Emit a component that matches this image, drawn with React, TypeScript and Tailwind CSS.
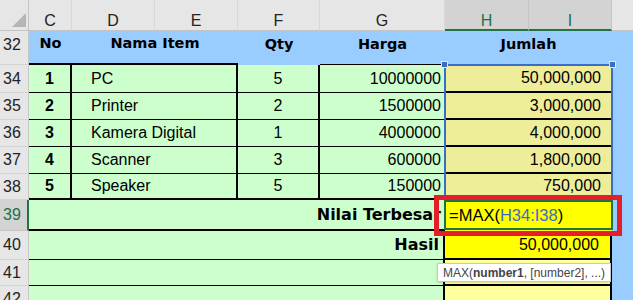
import React from 'react';

const rows = [
  { r: '34', no: '1', name: 'PC', qty: '5', harga: '10000000', jumlah: '50,000,000' },
  { r: '35', no: '2', name: 'Printer', qty: '2', harga: '1500000', jumlah: '3,000,000' },
  { r: '36', no: '3', name: 'Kamera Digital', qty: '1', harga: '4000000', jumlah: '4,000,000' },
  { r: '37', no: '4', name: 'Scanner', qty: '3', harga: '600000', jumlah: '1,800,000' },
  { r: '38', no: '5', name: 'Speaker', qty: '5', harga: '150000', jumlah: '750,000' },
];

const rowHead = 'bg-[#e6e6e6] border-r border-b border-r-[#c6c6c6] border-b-[#d4d4d4] flex items-center pl-[3px] text-[16px] text-[#222]';
const colHead = 'bg-[#e6e6e6] border-r border-b border-r-[#d8d8d8] border-b-[#c4c4c4] flex items-center justify-center pt-[12px] text-[16px] text-[#222]';
const colHeadSel = 'bg-[#d3d3d3] border-r border-b-2 border-r-[#c4c4c4] border-b-[#217346] flex items-center justify-center pt-[12px] text-[16px] text-[#1e7145]';
const blueHead = "bg-[#99ccff] flex items-center justify-center pb-[6px] font-['DejaVu_Sans',sans-serif] font-bold text-[14.5px] text-black";
const green = 'bg-[#ccffcc] flex items-center text-black';
const num = "font-['Liberation_Sans',Arial,sans-serif] text-[16px]";

export default function App() {
  return (
    <div className="relative w-[633px] h-[300px] overflow-hidden bg-white font-['Liberation_Sans',Arial,sans-serif]">
      <div className="grid grid-cols-[29px_43px_83px_83px_82px_125px_84px_83px_21px] grid-rows-[31px_34px_28px_27px_27px_27px_26px_31px_29px_26px_26px]">
        {/* column headers */}
        <div className="bg-[#e6e6e6] border-r border-b border-[#c4c4c4] relative">
          <svg className="absolute left-[12px] top-[13px]" width="14" height="14" viewBox="0 0 14 14">
            <polygon points="14,0 14,14 0,14" fill="#b5b5b5" />
          </svg>
        </div>
        <div className={colHead}>C</div>
        <div className={colHead}>D</div>
        <div className={colHead}>E</div>
        <div className={colHead}>F</div>
        <div className={colHead}>G</div>
        <div className={colHeadSel}>H</div>
        <div className={colHeadSel}>I</div>
        <div className="bg-[#e6e6e6] border-b border-[#c4c4c4]" />

        {/* row 32 */}
        <div className={`${rowHead} pb-[6px]`}>32</div>
        <div className={`${blueHead} border-b-2 border-black`}>No</div>
        <div className={`${blueHead} col-span-2 border-b-2 border-black`}>Nama Item</div>
        <div className={blueHead}>Qty</div>
        <div className={`${blueHead} border-b border-black`}>Harga</div>
        <div className={`${blueHead} col-span-2`}>Jumlah</div>
        <div className="bg-[#99ccff]" />

        {/* data rows */}
        {rows.map((it, i) => {
          const last = i === rows.length - 1;
          const bb = last ? 'border-b-2' : 'border-b';
          return (
            <React.Fragment key={it.r}>
              <div className={rowHead}>{it.r}</div>
              <div className={`${green} ${bb} border-r-2 border-black justify-center font-bold text-[16px]`}>{it.no}</div>
              <div className={`${green} ${bb} border-r-2 border-black col-span-2 pl-[19px] text-[16px]`}>{it.name}</div>
              <div className={`${green} ${bb} border-r-2 border-black justify-center ${num}`}>{it.qty}</div>
              <div className={`${green} ${bb} border-black justify-end pr-[4px] ${num}`}>{it.harga}</div>
              <div className={`bg-[#eeee9a] flex items-center justify-end pr-[11px] col-span-2 border-b-2 border-black ${num}`}>{it.jumlah}</div>
              <div className="bg-[#99ccff]" />
            </React.Fragment>
          );
        })}

        {/* row 39 */}
        <div className="bg-[#d3d3d3] border-r-2 border-b border-r-[#217346] border-b-[#c4c4c4] flex items-center pl-[3px] text-[16px] text-[#1e7145]">39</div>
        <div className={`${green} col-span-5 border-b-2 border-black justify-end pr-[4px] font-['DejaVu_Sans',sans-serif] font-bold text-[16px]`}>Nilai Terbesar</div>
        <div className="bg-[#ffff00] col-span-2 flex items-center pl-[4px] text-[16.5px] text-black">
          =MAX(<span className="text-[#3b6cc6]">H34:I38</span>)
        </div>
        <div className="bg-[#99ccff]" />

        {/* row 40 */}
        <div className={rowHead}>40</div>
        <div className={`${green} col-span-5 border-b border-r-2 border-black justify-end pr-[4px] font-['DejaVu_Sans',sans-serif] font-bold text-[16px]`}>Hasil</div>
        <div className={`bg-[#ffff00] col-span-2 flex items-center justify-end pr-[11px] border-r-2 border-b-2 border-black ${num}`}>50,000,000</div>
        <div className="bg-[#99ccff]" />

        {/* rows 41, 42 */}
        {['41', '42'].map((r) => (
          <React.Fragment key={r}>
            <div className={rowHead}>{r}</div>
            <div className={`${green} col-span-5 border-b border-r-2 border-black`} />
            <div className="bg-[#ffff9c] col-span-2 border-r-2 border-b-2 border-black" />
            <div className="bg-[#99ccff]" />
          </React.Fragment>
        ))}
      </div>

      {/* range highlight H34:I38 */}
      <div className="absolute left-[444px] top-[64px] w-[169px] h-[137px] border-2 border-[#3b6cc6]" />
      <div className="absolute left-[441px] top-[61px] size-[7px] bg-[#3b6cc6] border border-[#dfe8f7]" />
      <div className="absolute left-[609px] top-[61px] size-[7px] bg-[#3b6cc6] border border-[#dfe8f7]" />

      {/* active cell */}
      <div className="absolute left-[444px] top-[200px] w-[169px] h-[30px] border-2 border-[#217346]" />

      {/* red highlight */}
      <div className="absolute left-[434px] top-[195px] w-[188px] h-[41px] border-[5px] border-[#e3202a]" />

      {/* tooltip */}
      <div className="absolute left-[437px] top-[263px] h-[19px] px-[5px] flex items-center bg-white border border-[#c8c8c8] shadow-sm text-[12px] text-[#444] whitespace-nowrap">
        MAX(<span className="font-bold">number1</span>, [number2], ...)
      </div>
    </div>
  );
}
